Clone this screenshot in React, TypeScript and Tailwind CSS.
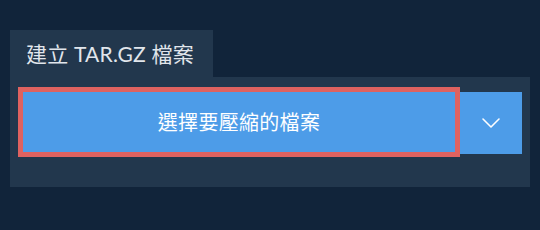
import { ChevronDown } from "lucide-react";

export default function App() {
  return (
    <div
      className="h-[230px] w-[540px] bg-[#11243a] px-[10px] pt-[30px]"
      style={{ fontFamily: 'Lato, "Noto Sans CJK TC", sans-serif' }}
    >
      <div className="flex">
        <div className="flex h-[47px] w-[203px] items-center bg-[#22374d] pl-4 text-[21px] tracking-[0.2px] text-[#e1e6ec]">
          建立 TAR.GZ 檔案
        </div>
      </div>
      <div className="flex items-start bg-[#22374d] px-2 pb-[30px] pt-[10px]">
        <button className="flex h-[70px] flex-1 items-center justify-center border-[5px] border-[#df6260] bg-[#4d9ce8] text-[20px] tracking-[0.3px] text-white">
          選擇要壓縮的檔案
        </button>
        <button className="mt-[5px] flex h-[62px] w-[62px] items-center justify-center bg-[#4d9ce8] text-white">
          <ChevronDown size={32} strokeWidth={1.2} />
        </button>
      </div>
    </div>
  );
}
